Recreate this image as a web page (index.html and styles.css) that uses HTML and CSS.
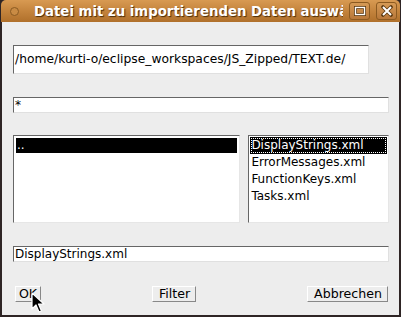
FILE: index.html
```html
<!DOCTYPE html>
<html lang="de">
<head>
    <meta charset="UTF-8">
    <title>Datei mit zu importierenden Daten auswählen</title>
    <link rel="stylesheet" href="styles.css">
</head>
<body>
    <div class="window">
        <div class="titlebar">
            <span class="menu-dot"></span>
            <span class="title">Datei mit zu importierenden Daten auswählen</span>
            <span class="wm-btn">
                <svg width="12" height="10" viewBox="0 0 12 10"><rect x="1.5" y="1.5" width="9" height="7" fill="none" stroke="#5a3810" stroke-width="3"/><rect x="1.5" y="1.5" width="9" height="7" fill="none" stroke="#fff" stroke-width="1.4"/></svg>
            </span>
            <span class="wm-btn">
                <svg width="12" height="12" viewBox="0 0 12 12"><path d="M2 2 L10 10 M10 2 L2 10" stroke="#5a3810" stroke-width="3.6" stroke-linecap="round"/><path d="M2 2 L10 10 M10 2 L2 10" stroke="#fff" stroke-width="2"/></svg>
            </span>
        </div>
        <div class="content">
            <div class="field path">/home/kurti-o/eclipse_workspaces/JS_Zipped/TEXT.de/</div>
            <div class="field wide">*</div>
            <div class="lists">
                <div class="list dirs">
                    <div class="item selected">..</div>
                </div>
                <div class="list files">
                    <div class="item selected focused">DisplayStrings.xml</div>
                    <div class="item">ErrorMessages.xml</div>
                    <div class="item">FunctionKeys.xml</div>
                    <div class="item">Tasks.xml</div>
                </div>
            </div>
            <div class="field wide">DisplayStrings.xml</div>
            <div class="buttons">
                <button class="btn ok">OK</button>
                <button class="btn">Filter</button>
                <button class="btn">Abbrechen</button>
            </div>
        </div>
        <svg class="cursor" width="14" height="22" viewBox="0 0 14 22"><path d="M1 1 L1 17 L5 13 L8 20 L10.5 19 L7.5 12 L13 12 Z" fill="#000" stroke="#fff" stroke-width="1.2" stroke-linejoin="round"/></svg>
    </div>
</body>
</html>
```

FILE: styles.css
```css
body {
    margin: 0;
    width: 401px;
    height: 317px;
    overflow: hidden;
    background: #2c2222;
    font-family: 'DejaVu Sans', sans-serif;
}

.window {
    position: relative;
    box-sizing: border-box;
    width: 401px;
    height: 317px;
    padding: 0 2px 2px 2px;
    background: #2e2424;
    display: flex;
    flex-direction: column;
}

.titlebar {
    height: 22px;
    margin: 0 -1px;
    border-radius: 5px 5px 0 0;
    background: linear-gradient(#d89a52, #c4843d 50%, #b0702b);
    display: flex;
    align-items: center;
    padding: 0 3px 0 9px;
    overflow: hidden;
}

.menu-dot {
    width: 7px;
    height: 7px;
    border-radius: 50%;
    border: 1px solid #8a5a22;
    background: #c98b44;
    flex: none;
}

.title {
    flex: 1;
    margin-left: 15px;
    color: #fff;
    font-weight: bold;
    font-size: 13.3px;
    white-space: nowrap;
    overflow: hidden;
    text-shadow: 1px 1px 1px #4a2c08;
}

.wm-btn {
    flex: none;
    width: 19px;
    height: 16px;
    margin-left: 6px;
    border: 1px solid #8c5a20;
    border-radius: 3px;
    background: linear-gradient(#d69a55, #b8783a);
    display: flex;
    align-items: center;
    justify-content: center;
}

.content {
    flex: 1;
    background: #ededed;
    padding: 0 10px 0 11px;
    display: flex;
    flex-direction: column;
}

.field {
    box-sizing: border-box;
    background: #fff;
    border-top: 1px solid #666;
    border-left: 1px solid #666;
    border-right: 1px solid #e0e0e0;
    border-bottom: 1px solid #e0e0e0;
    font-size: 12px;
    color: #000;
    white-space: nowrap;
    overflow: hidden;
    padding-left: 1px;
}

.path {
    margin-top: 23px;
    width: 356px;
    height: 29px;
    line-height: 27px;
    font-size: 12.3px;
}

.wide {
    margin-top: 23px;
    width: 376px;
    height: 16px;
    line-height: 14px;
}

.lists {
    margin-top: 22px;
    display: flex;
    gap: 8px;
}

.list {
    box-sizing: border-box;
    height: 88px;
    background: #fff;
    border-top: 1px solid #666;
    border-left: 1px solid #666;
    border-right: 1px solid #e6e6e6;
    border-bottom: 1px solid #e6e6e6;
    padding: 2px;
    font-size: 12px;
}

.dirs {
    width: 228px;
}

.files {
    width: 141px;
    padding: 1px;
}

.item {
    height: 17px;
    line-height: 17px;
    padding-left: 1px;
    white-space: nowrap;
}

.dirs .item {
    height: 15px;
    line-height: 15px;
}

.selected {
    background: #000;
    color: #fff;
}

.focused {
    box-sizing: border-box;
    outline: 1px dotted #fff;
    outline-offset: -2px;
}

.buttons {
    margin-top: 24px;
    padding: 0 1px 0 2px;
    display: flex;
    justify-content: space-between;
}

.btn {
    box-sizing: border-box;
    height: 16px;
    padding: 0 5px 0 6px;
    border: 1px solid;
    border-color: #fff #888 #888 #fff;
    background: #ededed;
    font-family: 'DejaVu Sans', sans-serif;
    font-size: 12.6px;
    line-height: 14px;
    color: #000;
}

.ok {
    width: 26px;
    padding: 0 2px;
}

.cursor {
    position: absolute;
    left: 31px;
    top: 292px;
}
```
